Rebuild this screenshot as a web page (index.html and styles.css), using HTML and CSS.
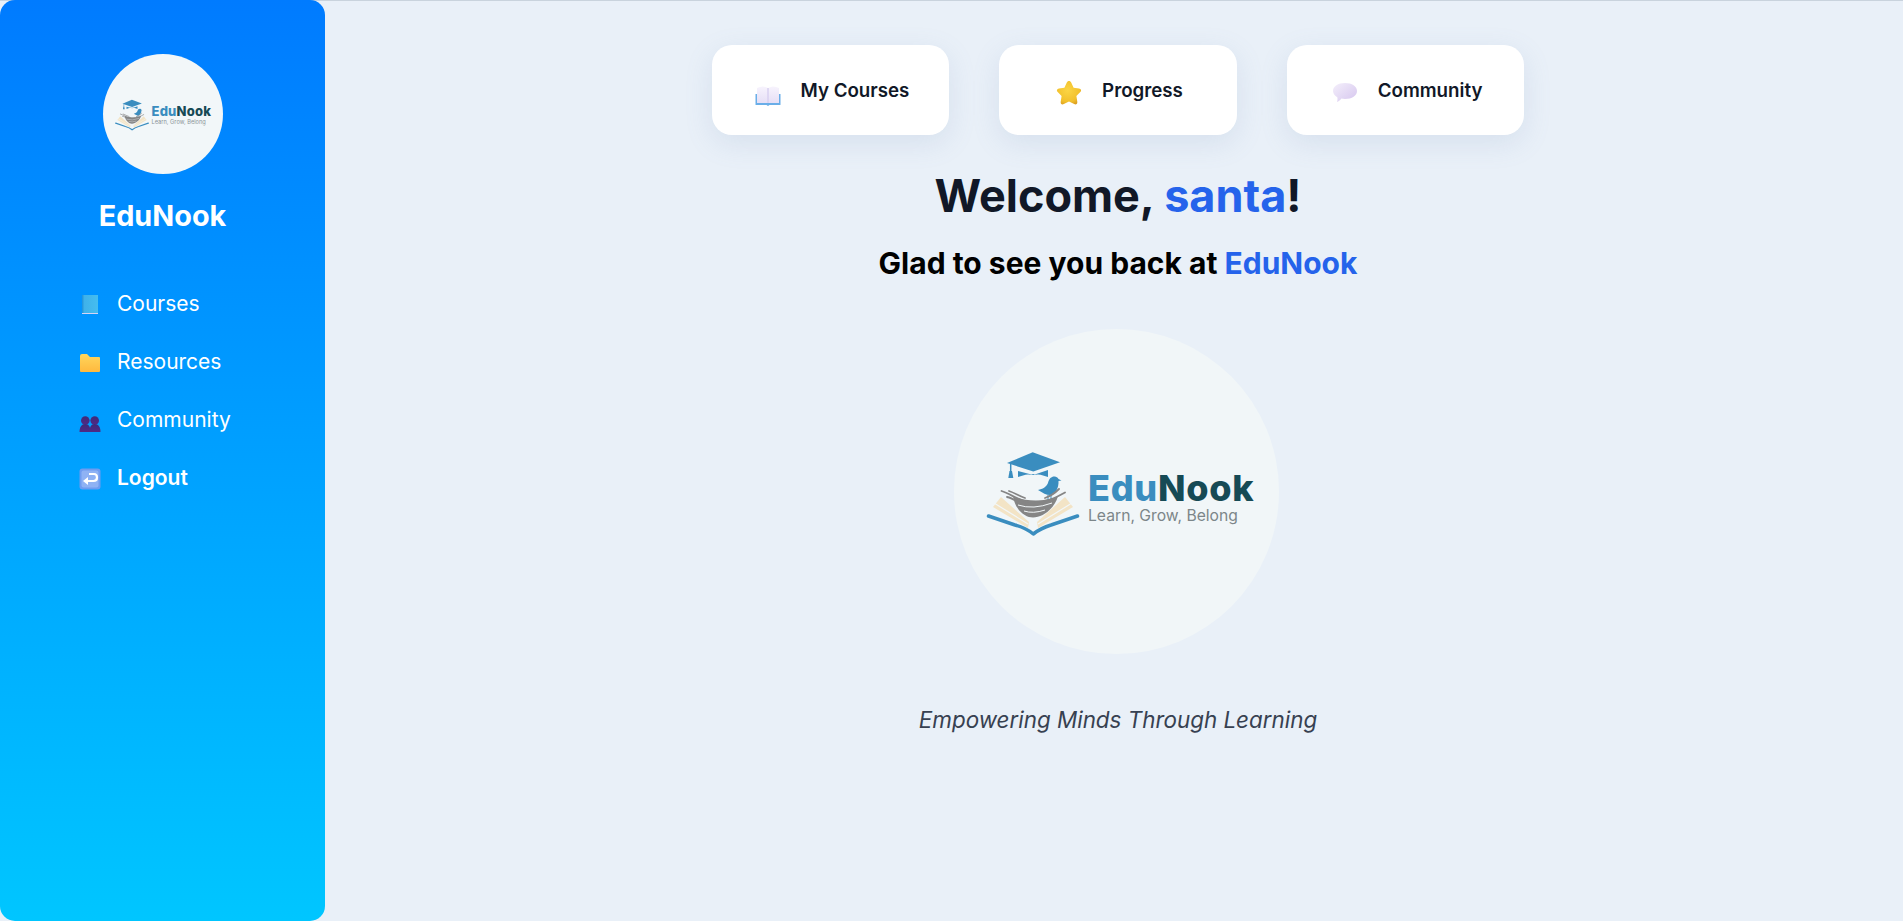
FILE: index.html
```html
<!DOCTYPE html>
<html lang="en">
<head>
<meta charset="utf-8">
<title>EduNook</title>
<link rel="stylesheet" href="styles.css">
</head>
<body>
<svg class="defs" width="0" height="0" aria-hidden="true">
  <defs>
    <linearGradient id="bk" x1="0" x2="1"><stop offset="0" stop-color="#1f8fd8"/><stop offset=".15" stop-color="#3fb2ea"/><stop offset="1" stop-color="#45bdf0"/></linearGradient>
    <linearGradient id="fd" x1="0" y1="0" x2="0" y2="1"><stop offset="0" stop-color="#ffd65c"/><stop offset="1" stop-color="#ffb93e"/></linearGradient>
    <linearGradient id="pp" x1="0" y1="0" x2="0" y2="1"><stop offset="0" stop-color="#3f2a78"/><stop offset="1" stop-color="#4f2a86"/></linearGradient>
    <linearGradient id="pg" x1="0" y1="0" x2="0" y2="1"><stop offset="0" stop-color="#f7f3fd"/><stop offset="1" stop-color="#e6dff6"/></linearGradient>
    <linearGradient id="bb" x1="0" y1="0" x2="1" y2="1"><stop offset="0" stop-color="#f4effb"/><stop offset="1" stop-color="#d5c5ee"/></linearGradient>
    <radialGradient id="st" cx=".45" cy=".4" r=".65"><stop offset="0" stop-color="#fbd544"/><stop offset=".75" stop-color="#f2c02c"/><stop offset="1" stop-color="#dc9f22"/></radialGradient>
  </defs>
  <symbol id="mark" viewBox="0 0 96 90">
    <path d="M8 57 L16 47 L44 72 L43 78Z" fill="#f3e4c6"/>
    <path d="M88 57 L80 47 L52 72 L53 78Z" fill="#f3e4c6"/>
    <path d="M9 53 L43 74 M87 53 L53 74" stroke="#f2f7f9" stroke-width="1.200"/>
    <path d="M3.500 66 L30 75 Q41 78 48.300 84 Q56 78 66 75 L92.500 66" fill="none" stroke="#3a8dbf" stroke-width="3.500" stroke-linecap="round" stroke-linejoin="round"/>
    <path d="M22 13 L47.700 2.300 L75 12.300 L48.300 21.500Z" fill="#3a8dbf"/>
    <path d="M33 21 L48.300 25 L63 20 V27 Q48 21 33 27Z" fill="#3a8dbf"/>
    <path d="M25.700 14 V22" stroke="#3a8dbf" stroke-width="1.500"/>
    <path d="M24.500 21 h2.500 l1.300 7 h-5z" fill="#3a8dbf"/>
    <path d="M53 40 C58 39 61 37 63 33 C64 28 67 26 70 26.500 C72 26.800 73 28 73.500 29 L76.500 30.500 L73.500 31 C74 38 70 45 65 45 C61 45 58 43 53 40Z" fill="#3a8dbf"/>
    <path d="M63 45 V50 M66 45 V50" stroke="#3a8dbf" stroke-width="1"/>
    <path d="M28 46 C30 60 40 67.500 48 67.500 C58 67.500 70 58 73 46 C62 52 40 52 28 46Z" fill="#858585"/>
    <path d="M16.500 41 C26 44 32 50 44 52 M24 41 C30 43 34 46 40 48 M80 42.500 C70 48 62 52 50 52 M74 39 C70 43 66 46 60 48 M22 47 C28 48 32 52 38 55" fill="none" stroke="#858585" stroke-width="1.800" stroke-linecap="round"/>
    <path d="M33 55 Q48 60 67 53 M39 61 Q48 64 60 60" fill="none" stroke="#f2f7f9" stroke-width="1"/>
  </symbol>
</svg>

<div class="app">
  <aside class="sidebar">
    <div class="side-logo">
      <svg class="side-mark"><use href="#mark"/></svg>
      <div class="side-words">
        <div class="side-name"><span class="edu">Edu</span><span class="nook">Nook</span></div>
        <div class="side-tag">Learn, Grow, Belong</div>
      </div>
    </div>
    <h2 class="brand">EduNook</h2>
    <nav class="nav">
      <a class="nav-item">
        <svg class="nav-icon" viewBox="0 0 22 22"><rect x="3" y="1" width="16" height="19" fill="url(#bk)"/><rect x="3" y="19" width="16" height="1" fill="#d6d3f5"/></svg>
        <span>Courses</span>
      </a>
      <a class="nav-item">
        <svg class="nav-icon" viewBox="0 0 22 22"><path d="M1 4 Q1 2 3 2 H8 L11 5 H20 Q21 5 21 6 V19 Q21 20 20 20 H2 Q1 20 1 19Z" fill="url(#fd)"/></svg>
        <span>Resources</span>
      </a>
      <a class="nav-item">
        <svg class="nav-icon" viewBox="0 0 22 22" fill="url(#pp)"><circle cx="6.300" cy="10.500" r="4.300"/><path d="M.5 22 C.5 17 2.500 14 6.300 14 C10 14 11.500 17 11.500 22Z"/><circle cx="15.700" cy="10.500" r="4.300"/><path d="M10.500 22 C10.500 17 12 14 15.700 14 C19.500 14 21.500 17 21.500 22Z"/></svg>
        <span>Community</span>
      </a>
      <a class="nav-item nav-strong">
        <svg class="nav-icon" viewBox="0 0 22 22"><rect x=".5" y=".5" width="21" height="21" rx="3" fill="#6f9cf0"/><rect x="2.500" y="2.500" width="17" height="17" rx="2" fill="#8fb2f4"/><path d="M10 6 H15 Q18 6 18 9.500 Q18 13 14.500 13 H7" fill="none" stroke="#fff" stroke-width="2.200"/><path d="M9 9 L4 13 L9 17Z" fill="#fff"/></svg>
        <span>Logout</span>
      </a>
    </nav>
  </aside>

  <main class="main">
    <div class="cards">
      <a class="card">
        <svg class="card-icon" viewBox="0 0 26 26"><path d="M2 8 Q8 5 13 8 Q18 5 24 8 V23 H2Z" fill="url(#pg)"/><path d="M13 8 V23" stroke="#d9d0f0" stroke-width="1.500"/><path d="M.5 14 H2 V23 H24 V14 H25.500 V24.500 Q25.500 25 25 25 H14.500 L13 26 L11.500 25 H1 Q.5 25 .5 24.500Z" fill="#6aaee8"/></svg>
        <span>My Courses</span>
      </a>
      <a class="card">
        <svg class="card-icon" viewBox="0 0 26 26"><path d="M13 1 C14 1 14.800 1.600 15.300 2.700 L17.600 7.700 L23 8.500 C25.200 8.900 25.800 10.700 24.300 12.100 L20.400 16 L21.300 21.700 C21.600 24 20 25 18.200 24.100 L13 21.500 L7.800 24.100 C6 25 4.400 24 4.700 21.700 L5.600 16 L1.700 12.100 C.2 10.700 .8 8.900 3 8.500 L8.400 7.700 L10.700 2.700 C11.200 1.600 12 1 13 1Z" fill="url(#st)"/></svg>
        <span>Progress</span>
      </a>
      <a class="card">
        <svg class="card-icon" viewBox="0 0 26 26"><path d="M13 3 C20 3 25 6.500 25 11 C25 15.500 20 19 13 19 C11.500 19 10.300 18.800 9.500 18.600 C8 20.500 6.500 21.500 5 22 C5.500 20.500 5.700 18.800 5.300 17.300 C2.800 15.700 1 13.500 1 11 C1 6.500 6 3 13 3Z" fill="url(#bb)"/></svg>
        <span>Community</span>
      </a>
    </div>
    <h1 class="welcome">Welcome, <span class="accent">santa</span>!</h1>
    <h2 class="glad">Glad to see you back at <span class="accent">EduNook</span></h2>
    <div class="hero-logo">
      <svg class="hero-mark"><use href="#mark"/></svg>
      <div class="hero-words">
        <div class="hero-name"><span class="edu">Edu</span><span class="nook">Nook</span></div>
        <div class="hero-tag">Learn, Grow, Belong</div>
      </div>
    </div>
    <p class="tagline">Empowering Minds Through Learning</p>
  </main>
</div>
</body>
</html>
```
FILE: styles.css
```css
* { box-sizing: border-box; }
html, body { margin: 0; height: 100%; }
body { font-family: Inter, "Liberation Sans", sans-serif; background: #e9f0f8; overflow: hidden; }
.defs { position: absolute; }
.app { display: flex; height: 921px; border-top: 1px solid #c9d3dd; }
.sidebar { width: 325px; flex: none; margin-top: -1px; background: linear-gradient(180deg, #007bff, #00c6ff); border-radius: 15px; padding-top: 54px; color: #fff; display: flex; flex-direction: column; align-items: center; }
.side-logo { width: 120px; height: 120px; border-radius: 50%; background: #f2f7f9; display: flex; align-items: center; padding-left: 11px; }
.side-mark { width: 36px; height: 33px; flex: none; margin-top: 3px; }
.side-words { margin-left: 2px; margin-top: 1px; }
.side-name { font-size: 13px; font-weight: 800; line-height: 13px; letter-spacing: .2px; }
.side-tag { font-size: 5.700px; color: #8a9498; line-height: 7px; white-space: nowrap; }
.edu { color: #3a8dbf; }
.nook { color: #164a55; }
.brand { margin: 23px 0 0; font-size: 28.800px; line-height: 38px; font-weight: 700; }
.nav { align-self: stretch; margin-top: 54px; padding-left: 79px; display: flex; flex-direction: column; gap: 29px; }
.nav-item { display: flex; align-items: center; gap: 16px; font-size: 21px; line-height: 29px; height: 29px; color: #fff; }
.nav-icon { width: 22px; height: 22px; flex: none; margin-top: 2px; }
.nav-strong { font-weight: 600; }
.main { flex: 1; padding-left: 8px; display: flex; flex-direction: column; align-items: center; }
.cards { display: flex; gap: 50px; margin-top: 44px; }
.card { width: 237.600px; height: 90px; padding-left: 3px; background: #fff; border-radius: 20px; box-shadow: 0 8px 28px rgba(120, 145, 185, .16); display: flex; align-items: center; justify-content: center; gap: 20px; font-size: 18.720px; font-weight: 600; color: #111827; }
.card-icon { width: 26px; height: 26px; flex: none; margin-top: 5px; }
.welcome { margin: 34px 0 0; font-size: 45px; line-height: 54px; font-weight: 700; color: #111827; }
.glad { margin: 22px 0 0; font-size: 30px; line-height: 36px; font-weight: 700; color: #000; }
.accent { color: #2563eb; }
.hero-logo { width: 325px; height: 325px; margin: 48px 3px 0 0; border-radius: 50%; background: #f1f6f8; display: flex; align-items: center; padding-left: 31px; }
.hero-mark { width: 96px; height: 90px; flex: none; margin-top: 7px; }
.hero-words { margin-left: 7px; margin-top: 10px; }
.hero-name { font-size: 36px; line-height: 38px; font-weight: 800; letter-spacing: .7px; }
.hero-tag { font-size: 15.700px; line-height: 18px; color: #7c8689; white-space: nowrap; }
.tagline { margin: 51px 0 0; font-size: 22.400px; line-height: 30px; font-style: italic; color: #374151; }
```
